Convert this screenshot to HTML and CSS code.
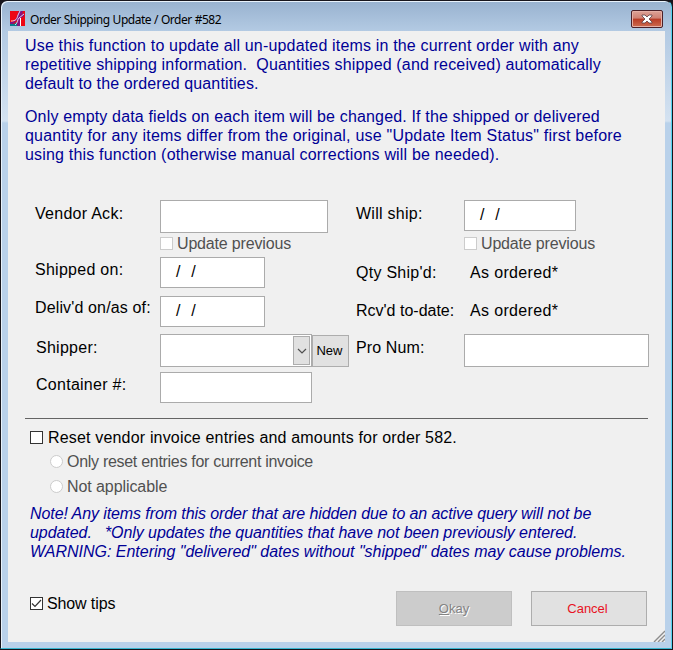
FILE: index.html
```html
<!DOCTYPE html>
<html lang="en">
<head>
<meta charset="utf-8">
<title>Order Shipping Update / Order #582</title>
<link rel="stylesheet" href="styles.css">
</head>
<body>
<div class="window">
  <header class="titlebar">
    <svg class="logo" width="15" height="15" viewBox="0 0 15 15"><path fill="#ee0614" d="M0 0h15v15H0z"/><path fill="#82127f" d="M9 0h4l-1 3 2-1v3l-3 2-1 8H7V9l-4 4H0v-2c4 0 6-2 7-6z"/><path fill="#087b89" d="M0 13h4l3-2v4H0z"/><path fill="none" stroke="#fff" stroke-width=".8" d="M1 10c5 0 6-2 7-6l2-4M5 14c3-2 2-5 4-7l5-4"/><path fill="none" stroke="#fff" d="M10.500 7v8"/></svg>
    <h1 class="title">Order Shipping Update / Order #582</h1>
    <button class="close" aria-label="Close"><svg width="12" height="10" viewBox="0 0 12 10"><path d="M1 1h3l2 2 2-2h3v1L8 5l3 3v1H8L6 7 4 9H1V8l3-3-3-3z" fill="#fff" stroke="#5b3c42" stroke-width=".8"/></svg></button>
  </header>
  <main class="client">
    <section class="intro">
      <p><span class="l1">Use this function to update all un-updated items in the current order with any</span><br><span class="l2">repetitive shipping information.&nbsp; Quantities shipped (and received) automatically</span><br><span class="l3">default to the ordered quantities.</span></p>
      <p><span class="l4">Only empty data fields on each item will be changed. If the shipped or delivered</span><br><span class="l5">quantity for any items differ from the original, use "Update Item Status" first before</span><br><span class="l6">using this function (otherwise manual corrections will be needed).</span></p>
    </section>
    <section class="form">
      <label class="d4">Vendor Ack:</label><div class="field vendor"></div>
      <label class="d4">Will ship:</label><div class="field will">/&nbsp; /</div>
      <div class="check prev left"><i class="box off"></i>Update previous</div>
      <div class="check prev right"><i class="box off"></i>Update previous</div>
      <label class="d3">Shipped on:</label><div class="field date">/&nbsp; /</div>
      <label class="d6">Qty Ship'd:</label><span class="value d6">As ordered*</span>
      <label class="d2 delivered">Deliv'd on/as of:</label><div class="field date">/&nbsp; /</div>
      <label class="d5 received">Rcv'd to-date:</label><span class="value d5">As ordered*</span>
      <label class="d4 in">Shipper:</label>
      <div class="shipper"><div class="field combo"><span class="drop"><svg width="10" height="6" viewBox="0 0 10 6"><path d="M1 1l4 4 4-4" fill="none" stroke="#505050" stroke-width="1.2"/></svg></span></div><button class="new">New</button></div>
      <label class="d4 pronum">Pro Num:</label><div class="field pro"></div>
      <label class="d3 in">Container #:</label><div class="field container"></div>
    </section>
    <section class="reset">
      <div class="check main"><i class="box"></i><span>Reset vendor invoice entries and amounts for order 582.</span></div>
      <div class="check sub only"><i class="radio"></i>Only reset entries for current invoice</div>
      <div class="check sub"><i class="radio"></i>Not applicable</div>
    </section>
    <p class="note"><span class="n1">Note! Any items from this order that are hidden due to an active query will not be</span><br><span class="n2">updated.&nbsp;&nbsp; *Only updates the quantities that have not been previously entered.</span><br><span class="n3">WARNING: Entering "delivered" dates without "shipped" dates may cause problems.</span></p>
    <footer class="footer">
      <div class="check tips"><i class="box"><svg width="11" height="11" viewBox="0 0 11 11"><path d="M1 5.5l3 3 6-6.500" fill="none" stroke="#333" stroke-width="1.2"/></svg></i>Show tips</div>
      <button class="btn okay" disabled><u>O</u>kay</button>
      <button class="btn cancel">Cancel</button>
    </footer>
    <svg class="grip" width="12" height="12" viewBox="0 0 12 12"><path d="M1 12L12 1M5 12l7-7M9 12l3-3" stroke="#8c8c8c" stroke-width="1.4"/></svg>
  </main>
</div>
</body>
</html>
```
FILE: styles.css
```css
* { box-sizing: border-box; }
body { margin: 0; background: #17151c; font: 16px/19px "Liberation Sans", Arial, sans-serif; color: #000; }
p, h1 { margin: 0; font-weight: normal; }
button { font-family: inherit; padding: 0; }
svg { display: block; }
.window {
  width: 672px; height: 649px; padding: 0 6px 6px 7px;
  border: 1px solid #17151c; border-bottom-color: #38b6d0; border-right-color: #54d4ef;
  border-radius: 7px 7px 0 0;
  background: linear-gradient(#98b2cf 0, #b3cae3 30px, #d4e2f1 120px, #b9d1ea 122px);
  box-shadow: inset 1px 1px #e8f2fb;
  display: flex; flex-direction: column;
}
.titlebar { height: 30px; flex: none; display: flex; padding-left: 2px; }
.logo { margin-top: 10px; }
.title { font: 12px/16px "Noto Sans", sans-serif; letter-spacing: -.48px; word-spacing: .3px; margin: 11px auto 0 5px; white-space: nowrap; }
.close {
  width: 32px; height: 18px; margin: 9px 2px 0 0; border: 1px solid #4b2028; border-radius: 2px;
  background: linear-gradient(#dda297 0, #d08173 45%, #b93b25 50%, #cd6c50 100%);
  box-shadow: inset 0 0 0 1px #e5afa5; display: grid; place-items: center;
}
.client { position: relative; flex: 1; background: #f0f0f0; padding: 5px 17px 0; display: flex; flex-direction: column; white-space: nowrap; }
.intro { color: #000096; height: 164px; }
.intro p { margin-bottom: 14px; }
.l1 { letter-spacing: .17px; }
.l2, .l4 { letter-spacing: .16px; }
.l3 { letter-spacing: .12px; }
.l5 { letter-spacing: .215px; }
.l6 { letter-spacing: .18px; }
.form { height: 219px; border-bottom: 1px solid #646464; display: grid; grid-template-columns: 125px 196px 108px 185px; grid-template-rows: 37px 20px 39px 38px 38px 46px; padding-left: 10px; align-items: start; }
.form label { letter-spacing: .27px; }
.form .delivered { letter-spacing: .14px; }
.form .received { letter-spacing: 0; }
.form .pronum { letter-spacing: .12px; }
.d2 { padding-top: 2px; } .d3 { padding-top: 3px; } .d4 { padding-top: 4px; } .d5 { padding-top: 5px; } .d6 { padding-top: 6px; }
.in { padding-left: 1px; }
.value { letter-spacing: .35px; }
.value.d5, .value.d6 { padding-left: 6px; }
.field { height: 31px; background: #fff; border: 1px solid #ababab; padding: 4px 0 0 15px; word-spacing: 1px; }
.vendor { width: 168px; height: 33px; }
.will { width: 112px; }
.date { width: 105px; }
.container { width: 152px; }
.pro { width: 185px; height: 33px; }
.shipper { display: flex; }
.combo { width: 152px; height: 33px; padding: 1px; display: flex; justify-content: flex-end; }
.drop { width: 17px; height: 29px; border: 1px solid #adadad; background: #e1e1e1; display: grid; place-items: center; }
.new { width: 37px; height: 32px; margin-top: 1px; border: 1px solid #adadad; background: #e1e1e1; font-size: 13px; padding: 0 2px 1px 0; }
.check { display: flex; align-items: center; gap: 4px; height: 19px; }
.box { width: 13px; height: 13px; border: 1px solid #333; background: #fff; flex: none; }
.box.off { border-color: #ccc; }
.radio { width: 13px; height: 13px; border: 1px solid #ccc; border-radius: 50%; background: #fff; flex: none; }
.prev { color: #505050; margin-top: -3px; letter-spacing: -.17px; }
.left { grid-column: 2; } .right { grid-column: 4; }
.reset { padding: 9px 0 0 5px; height: 85px; }
.main { gap: 5px; margin-bottom: 5px; letter-spacing: .175px; }
.sub { color: #505050; padding-left: 20px; margin-bottom: 6px; letter-spacing: -.08px; }
.only { letter-spacing: -.29px; }
.note { color: #000096; font-style: italic; padding-left: 5px; height: 87px; }
.n1 { letter-spacing: -.09px; }
.n2 { letter-spacing: -.065px; }
.n3 { letter-spacing: -.012px; }
.footer { display: flex; padding-left: 5px; }
.tips { margin: 3px auto 0 0; letter-spacing: -.12px; }
.btn { width: 116px; height: 35px; font-size: 13px; border: 1px solid #adadad; background: #e1e1e1; }
.okay { background: #ccc; border-color: #bfbfbf; color: #838383; text-shadow: 1px 1px #fff; margin-right: 19px; }
.cancel { color: #e81123; margin-right: 1px; padding-right: 3px; }
.grip { position: absolute; right: 0; bottom: 0; }
```
